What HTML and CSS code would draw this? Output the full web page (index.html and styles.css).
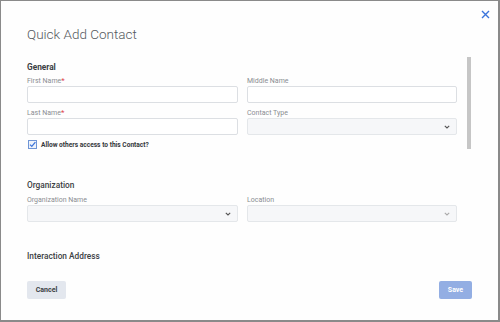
FILE: index.html
```html
<!DOCTYPE html>
<html>
<head>
<meta charset="utf-8">
<link rel="stylesheet" href="styles.css">
</head>
<body>
<div class="modal">
  <button class="close" aria-label="Close">
    <svg width="9" height="9" viewBox="0 0 9 9"><path d="M1 1L8 8M8 1L1 8" stroke="#3b74db" stroke-width="1.4" fill="none"/></svg>
  </button>
  <h1 class="title">Quick Add Contact</h1>
  <div class="body">
    <div class="scroll">
      <h2 class="section first">General</h2>
      <div class="grid">
        <div class="field">
          <label class="label">First Name<span class="req">*</span></label>
          <div class="input"></div>
        </div>
        <div class="field">
          <label class="label">Middle Name</label>
          <div class="input"></div>
        </div>
        <div class="field">
          <label class="label">Last Name<span class="req">*</span></label>
          <div class="input"></div>
        </div>
        <div class="field">
          <label class="label">Contact Type</label>
          <div class="input select"><svg class="chev" width="6" height="4" viewBox="0 0 6 4"><path d="M0.8 0.8L3 3L5.2 0.8" stroke="#555" stroke-width="1.1" fill="none"/></svg></div>
        </div>
      </div>
      <div class="check">
        <span class="box"><svg width="9" height="9" viewBox="0 0 9 9"><path d="M2 4.6L3.8 6.4L7.4 2.2" stroke="#3b74db" stroke-width="1.3" fill="none"/></svg></span>
        <span class="check-text">Allow others access to this Contact?</span>
      </div>
      <h2 class="section org">Organization</h2>
      <div class="grid">
        <div class="field">
          <label class="label">Organization Name</label>
          <div class="input select"><svg class="chev" width="6" height="4" viewBox="0 0 6 4"><path d="M0.8 0.8L3 3L5.2 0.8" stroke="#555" stroke-width="1.1" fill="none"/></svg></div>
        </div>
        <div class="field">
          <label class="label">Location</label>
          <div class="input select"><svg class="chev" width="6" height="4" viewBox="0 0 6 4"><path d="M0.8 0.8L3 3L5.2 0.8" stroke="#aaa" stroke-width="1.1" fill="none"/></svg></div>
        </div>
      </div>
      <h2 class="section addr">Interaction Address</h2>
    </div>
    <div class="thumb"></div>
  </div>
  <div class="footer">
    <button class="btn cancel">Cancel</button>
    <button class="btn save">Save</button>
  </div>
</div>
</body>
</html>
```

FILE: styles.css
```css
* { box-sizing: border-box; }
html, body { margin: 0; padding: 0; }
body {
  width: 500px;
  height: 322px;
  font-family: Roboto, "Liberation Sans", sans-serif;
  background: #fff;
}
.modal {
  position: relative;
  width: 500px;
  height: 322px;
  border-style: solid;
  border-color: #8a8a8a;
  border-width: 1px 2px 2px 1px;
  background: #fefefe;
  display: flex;
  flex-direction: column;
}
.close {
  position: absolute;
  top: 8px;
  right: 7px;
  width: 11px;
  height: 11px;
  padding: 1px;
  border: 0;
  background: none;
  display: flex;
}
.title {
  margin: 23px 0 0 26px;
  font-size: 13.5px;
  line-height: 20px;
  font-weight: 300;
  color: #555a60;
}
.body {
  position: relative;
  flex: 1;
  overflow: hidden;
}
.scroll {
  padding: 18px 0 0 26px;
  width: 457px;
}
.section {
  margin: 0;
  font-size: 8.3px;
  line-height: 11px;
  font-weight: 700;
  color: #3c3f44;
}
.section.first { margin-bottom: 4px; }
.section.org { margin-top: 31px; margin-bottom: 5px; font-weight: 500; }
.section.addr { margin-top: 29px; font-weight: 500; }
.grid {
  display: grid;
  grid-template-columns: 211px 210px;
  column-gap: 9px;
  row-gap: 6px;
}
.field { display: flex; flex-direction: column; }
.label {
  font-size: 7px;
  line-height: 8px;
  color: #8a8d92;
  margin-bottom: 1px;
}
.req { color: #e0434b; font-size: 8px; }
.input {
  height: 17px;
  border: 1px solid #dcdfe3;
  border-radius: 2px;
  background: #fff;
}
.select {
  background: #f6f7f9;
  border-color: #e4e7ea;
  display: flex;
  align-items: center;
  justify-content: flex-end;
  padding-right: 6px;
}
.check {
  display: flex;
  align-items: center;
  margin-top: 5px;
  padding-left: 1px;
  height: 9px;
}
.box {
  width: 9px;
  height: 9px;
  border: 1px solid #6f95d6;
  background: #eef3fb;
  display: flex;
  align-items: center;
  justify-content: center;
  margin-right: 4px;
}
.box svg { flex: none; }
.check-text {
  font-size: 6.6px;
  font-weight: 700;
  color: #34373b;
}
.thumb {
  position: absolute;
  top: 13px;
  left: 466px;
  width: 4px;
  height: 92px;
  background: #c6c6c6;
}
.footer {
  height: 50px;
  padding: 11px 26px 0 26px;
  display: flex;
  justify-content: space-between;
  align-items: flex-start;
}
.btn {
  height: 18px;
  border: 0;
  border-radius: 2px;
  font-family: Roboto, "Liberation Sans", sans-serif;
  font-size: 7px;
  font-weight: 700;
  padding: 0;
}
.cancel { width: 39px; background: #e3e7ee; color: #3a3d42; }
.save { width: 33px; background: #93aee3; color: #fff; }
```
